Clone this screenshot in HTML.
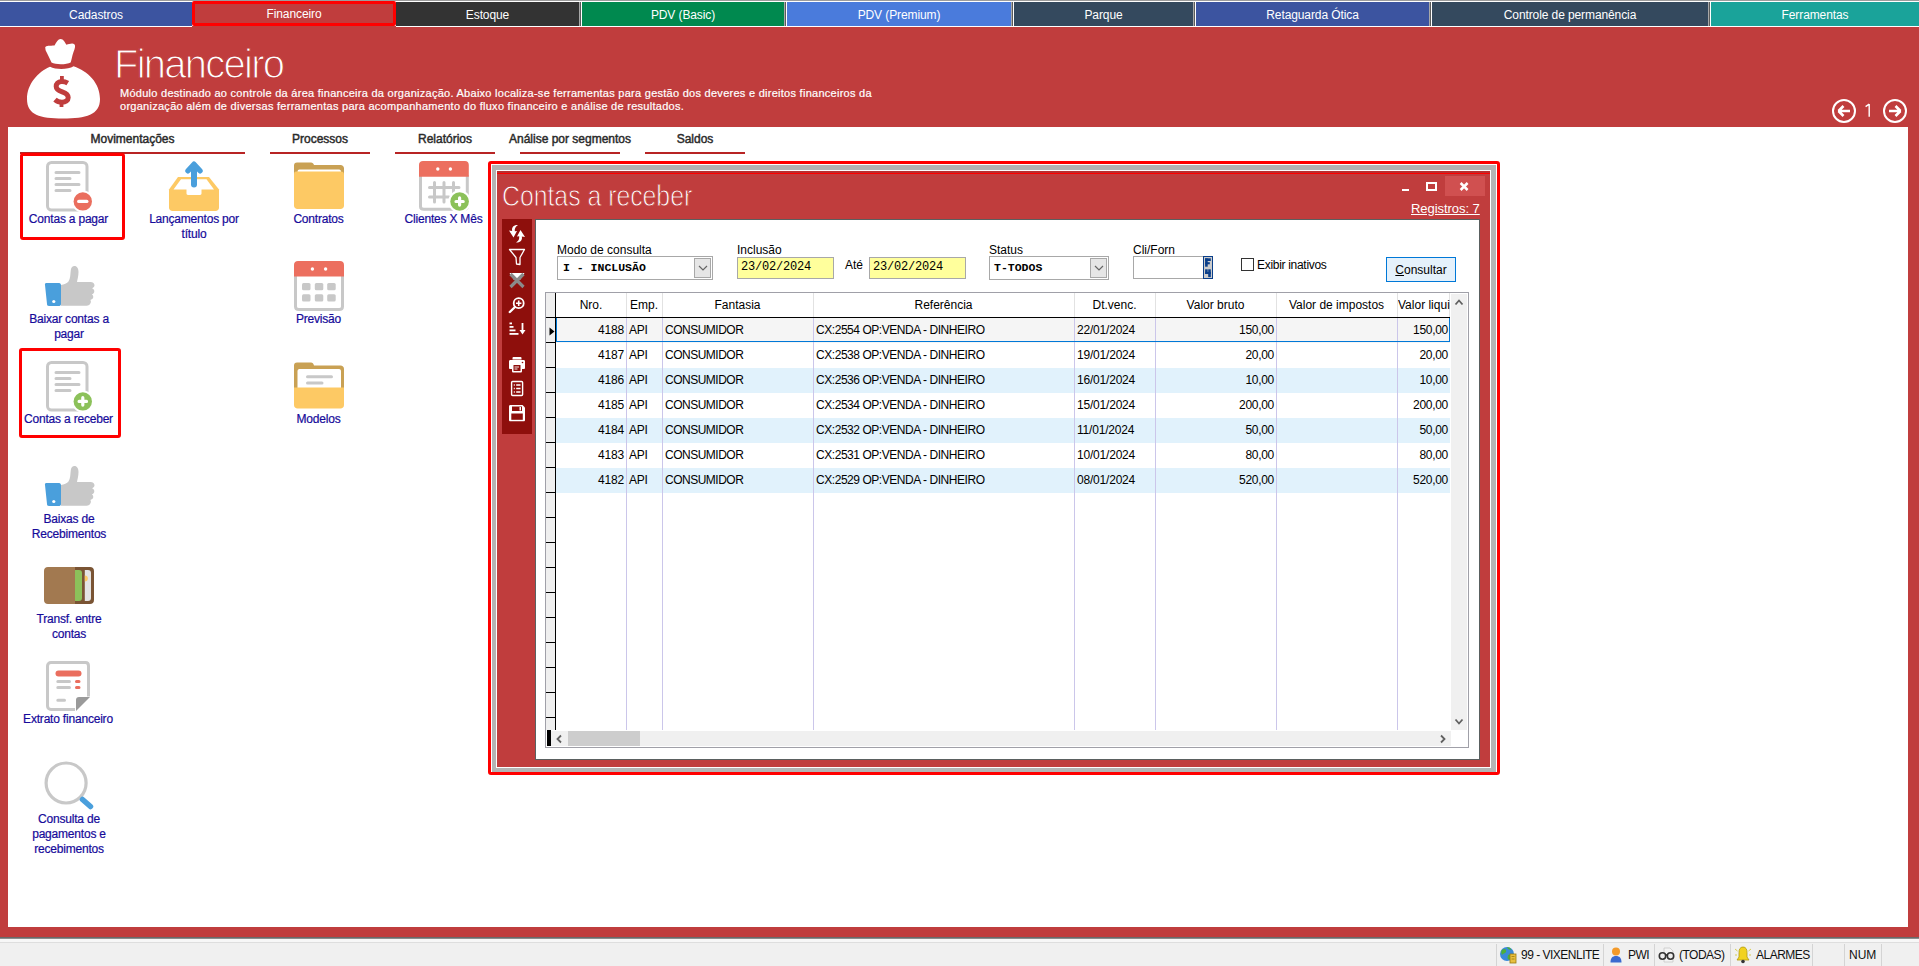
<!DOCTYPE html>
<html><head><meta charset="utf-8">
<style>
*{margin:0;padding:0;box-sizing:border-box}
html,body{width:1919px;height:966px;overflow:hidden;background:#c03d3d;font-family:"Liberation Sans",sans-serif;font-size:12px}
.a{position:absolute}
#topline{left:0;top:0;width:1919px;height:1px;background:#9c9c9c}
#tabs{left:0;top:1px;width:1919px;height:26px;background:#fff}
.tab{position:absolute;top:1px;height:24px;color:#fff;text-align:center;line-height:26px;font-size:12px;letter-spacing:-0.1px}
.sep{position:absolute;top:1px;height:24px;width:2px;background:linear-gradient(90deg,#a8a8a8 50%,#5c5c5c 50%)}
#main{left:0;top:27px;width:1919px;height:910px;background:#c03d3d}
#status{left:0;top:937px;width:1919px;height:29px;background:#f0f0f0;border-top:1px solid #a0a0a0}
#panel{left:8px;top:127px;width:1900px;height:800px;background:#fff}
.sec{position:absolute;top:131px;height:22px;font-weight:bold;font-size:11px;color:#333;text-align:center;border-bottom:2px solid #c03538;white-space:nowrap}
.lbl{position:absolute;color:#160a9a;font-size:12px;text-align:center;line-height:15px;letter-spacing:-0.2px;margin-top:1px;-webkit-text-stroke:0.2px #160a9a}
</style></head><body>
<div class="a" id="topline"></div>
<div class="a" id="tabs">
  <div class="tab" style="left:0;width:192px;background:#3c54a0">Cadastros</div>
  <div class="tab" style="left:192px;top:0;width:204px;height:25px;background:#c03d3d;border:3px solid #ff0000;border-radius:2px;line-height:20px">Financeiro</div>
  <div class="tab" style="left:396px;width:183px;background:#333333">Estoque</div>
  <div class="sep" style="left:579px"></div>
  <div class="tab" style="left:582px;width:202px;background:#00894f">PDV (Basic)</div>
  <div class="sep" style="left:784px"></div>
  <div class="tab" style="left:787px;width:224px;background:#4a7bdc">PDV (Premium)</div>
  <div class="sep" style="left:1011px"></div>
  <div class="tab" style="left:1014px;width:179px;background:#34495e">Parque</div>
  <div class="sep" style="left:1193px"></div>
  <div class="tab" style="left:1196px;width:233px;background:#3c54a0">Retaguarda Ótica</div>
  <div class="sep" style="left:1429px"></div>
  <div class="tab" style="left:1432px;width:276px;background:#34495e">Controle de permanência</div>
  <div class="sep" style="left:1708px"></div>
  <div class="tab" style="left:1711px;width:208px;background:#1aa39a">Ferramentas</div>
</div>
<div class="a" id="main"></div>
<div class="a" style="left:192px;top:26px;width:204px;height:1px;background:#c03d3d"></div>

<svg class="a" style="left:20px;top:35px" width="90" height="90" viewBox="0 0 90 90">
  <path fill="#fff" d="M25.2,12.3 C26,10.5 30,10.6 34.5,10.4 C36.5,7 38,4 40.6,4 C43.4,4 45,7.5 46.5,9.8 C49,9.2 52.5,7.6 54.6,9.4 C55.6,10.6 55,13 53.5,17 C52,21 51.6,25.5 50.6,27.4 C47,29.6 36,30 31.5,27.6 C29.5,23 27.6,19 25.6,15.2 Z"/>
  <path fill="#fff" d="M30,31.8 C36,34.8 48,34.8 53.6,31.2 C68,36 80,48 80,64 C80,80 66,83.5 43,83.5 C20,83.5 7,80 7,64 C7,49 18,37 30,31.8 Z"/>
  <path d="M47.8,48.2 C45.5,46.8 43.5,46.4 41.5,46.5 C38,46.7 36.2,48.8 36.2,51.4 C36.2,54.6 39.2,55.8 42.2,56.9 C45.6,58.1 48.2,59.6 48.2,62.6 C48.2,65.6 45.6,67.2 42,67.2 C39.5,67.2 37,66.4 35,64.6" fill="none" stroke="#c03d3d" stroke-width="5"/><path d="M41.9,41 V47 M41.5,66.5 V72" stroke="#c03d3d" stroke-width="3.8"/>
</svg>
<div class="a" style="left:114px;top:40px;font-size:40px;line-height:48px;color:#fff;white-space:nowrap;letter-spacing:-1.75px;-webkit-text-stroke:1.2px #c03d3d">Financeiro</div>
<div class="a" style="left:120px;top:87px;font-size:11px;line-height:13px;color:#fff;letter-spacing:0.27px;white-space:nowrap;-webkit-text-stroke:0.2px #fff">Módulo destinado ao controle da área financeira da organização. Abaixo localiza-se ferramentas para gestão dos deveres e direitos financeiros da<br>organização além de diversas ferramentas para acompanhamento do fluxo financeiro e análise de resultados.</div>
<svg class="a" style="left:1826px;top:93px" width="90" height="36" viewBox="0 0 90 36">
  <circle cx="18" cy="18" r="11" fill="none" stroke="#fff" stroke-width="2"/>
  <path d="M12,18 H24 M12.5,18 L17.5,13 M12.5,18 L17.5,23" stroke="#fff" stroke-width="2.6" fill="none"/>
  <circle cx="69" cy="18" r="11" fill="none" stroke="#fff" stroke-width="2"/>
  <path d="M63,18 H75 M74.5,18 L69.5,13 M74.5,18 L69.5,23" stroke="#fff" stroke-width="2.6" fill="none"/>
  <path d="M43.2,11 V23.8 M43.2,11.2 L39.6,13.6" stroke="#fff" stroke-width="1.4" fill="none"/>
</svg>
<div class="a" id="panel"></div>
<div class="a" style="left:52.5px;top:132px;width:160px;text-align:center;font-size:12px;color:#2a2a2a;white-space:nowrap;line-height:14px;-webkit-text-stroke:0.45px #2a2a2a">Movimentações</div>
<div class="a" style="left:20px;top:152px;width:225px;height:2px;background:#b82424"></div>
<div class="a" style="left:240.0px;top:132px;width:160px;text-align:center;font-size:12px;color:#2a2a2a;white-space:nowrap;line-height:14px;-webkit-text-stroke:0.45px #2a2a2a">Processos</div>
<div class="a" style="left:270px;top:152px;width:100px;height:2px;background:#b82424"></div>
<div class="a" style="left:365.0px;top:132px;width:160px;text-align:center;font-size:12px;color:#2a2a2a;white-space:nowrap;line-height:14px;-webkit-text-stroke:0.45px #2a2a2a">Relatórios</div>
<div class="a" style="left:395px;top:152px;width:100px;height:2px;background:#b82424"></div>
<div class="a" style="left:490.0px;top:132px;width:160px;text-align:center;font-size:12px;color:#2a2a2a;white-space:nowrap;line-height:14px;-webkit-text-stroke:0.45px #2a2a2a">Análise por segmentos</div>
<div class="a" style="left:520px;top:152px;width:100px;height:2px;background:#b82424"></div>
<div class="a" style="left:615.0px;top:132px;width:160px;text-align:center;font-size:12px;color:#2a2a2a;white-space:nowrap;line-height:14px;-webkit-text-stroke:0.45px #2a2a2a">Saldos</div>
<div class="a" style="left:645px;top:152px;width:100px;height:2px;background:#b82424"></div>
<div class="a" style="left:20px;top:153px;width:105px;height:87px;border:3px solid #ff0000;border-radius:3px"></div>
<div class="a" style="left:19px;top:348px;width:102px;height:90px;border:3px solid #ff0000;border-radius:3px"></div>
<svg class="a" style="left:46px;top:161px" width="48" height="52" viewBox="0 0 48 52">
<rect x="1.5" y="1.5" width="39.5" height="47.5" rx="4" fill="none" stroke="#c8c8c8" stroke-width="3"/>
<path d="M10,11.5 H33 M10,17.5 H24 M10,23.5 H33 M10,29.5 H24" stroke="#c8c8c8" stroke-width="3" stroke-linecap="round"/>
<circle cx="36.8" cy="40.4" r="11" fill="#fff"/><circle cx="36.8" cy="40.4" r="9.2" fill="#ea6e5e"/><path d="M32.8,40.4 H40.8" stroke="#fff" stroke-width="3.4" stroke-linecap="round"/></svg>
<div class="lbl" style="left:8.5px;top:211px;width:120px">Contas a pagar</div>
<svg class="a" style="left:44px;top:266px" width="52" height="42" viewBox="0 0 52 42">
<path fill="#c8c8c8" d="M17,19 C20,18.5 23,17.5 24.5,15.5 C26.5,12.5 26.3,8 26.8,4 C27.2,1.5 28.5,0 30.5,0 C33,0 34.5,2.5 34.5,6 C34.5,10 33.5,13 33,16 L46.5,16 C49,16 50.5,17.5 50.5,19.3 C50.5,20.8 49.5,21.8 48,22.2 C49.5,22.7 50.3,23.8 50.3,25.3 C50.3,27 49.2,28 47.8,28.4 C49,29 49.5,30.2 49.2,31.5 C48.8,32.9 47.8,33.6 46.3,33.9 C46.9,34.6 47.1,35.6 46.7,36.8 C46,38.8 44.5,39.8 42.5,39.8 L17,39.8 Z"/>
<path fill="#4a9fdc" d="M1,19 C0.5,17.5 1.5,17 3,17 L15,17 C16.5,17 17,18 17,19.5 L17,38 C17,39.5 16,40 14.5,40 L5,40 C3.5,40 3,39 3,38 Z"/>
<circle cx="9.8" cy="35.5" r="1.6" fill="#fff"/></svg>
<div class="lbl" style="left:9.0px;top:311px;width:120px">Baixar contas a<br>pagar</div>
<svg class="a" style="left:46px;top:361px" width="48" height="52" viewBox="0 0 48 52">
<rect x="1.5" y="1.5" width="39.5" height="47.5" rx="4" fill="none" stroke="#c8c8c8" stroke-width="3"/>
<path d="M10,11.5 H33 M10,17.5 H24 M10,23.5 H33 M10,29.5 H24" stroke="#c8c8c8" stroke-width="3" stroke-linecap="round"/>
<circle cx="36.8" cy="40.4" r="11" fill="#fff"/><circle cx="36.8" cy="40.4" r="9.2" fill="#8cc15a"/><path d="M33.1,40.4 H40.5 M36.8,36.7 V44.1" stroke="#fff" stroke-width="3.2" stroke-linecap="round"/></svg>
<div class="lbl" style="left:8.5px;top:411px;width:120px">Contas a receber</div>
<svg class="a" style="left:44px;top:466px" width="52" height="42" viewBox="0 0 52 42">
<path fill="#c8c8c8" d="M17,19 C20,18.5 23,17.5 24.5,15.5 C26.5,12.5 26.3,8 26.8,4 C27.2,1.5 28.5,0 30.5,0 C33,0 34.5,2.5 34.5,6 C34.5,10 33.5,13 33,16 L46.5,16 C49,16 50.5,17.5 50.5,19.3 C50.5,20.8 49.5,21.8 48,22.2 C49.5,22.7 50.3,23.8 50.3,25.3 C50.3,27 49.2,28 47.8,28.4 C49,29 49.5,30.2 49.2,31.5 C48.8,32.9 47.8,33.6 46.3,33.9 C46.9,34.6 47.1,35.6 46.7,36.8 C46,38.8 44.5,39.8 42.5,39.8 L17,39.8 Z"/>
<path fill="#4a9fdc" d="M1,19 C0.5,17.5 1.5,17 3,17 L15,17 C16.5,17 17,18 17,19.5 L17,38 C17,39.5 16,40 14.5,40 L5,40 C3.5,40 3,39 3,38 Z"/>
<circle cx="9.8" cy="35.5" r="1.6" fill="#fff"/></svg>
<div class="lbl" style="left:9.0px;top:511px;width:120px">Baixas de<br>Recebimentos</div>
<svg class="a" style="left:44px;top:567px" width="50" height="38" viewBox="0 0 50 38">
<path fill="#7a5434" d="M28,0 H46 C48.5,0 50,1.5 50,4 V33 C50,35.5 48.5,37 46,37 H28 Z"/>
<path fill="#a27950" d="M4,0 H31 V37 H4 C1.5,37 0,35.5 0,33 V4 C0,1.5 1.5,0 4,0 Z"/>
<path fill="#8cc15a" d="M31,3 H35 C37,3 38,4 38,6 V31 C38,33 37,34 35,34 H31 Z"/>
<path fill="#e4e4e4" d="M40.8,3 H44 C46,3 47,4 47,6 V31 C47,33 46,34 44,34 H40.8 Z"/>
<path fill="#fdc964" d="M40.8,8.5 A3,3 0 0 1 40.8,14.5 Z"/></svg>
<div class="lbl" style="left:9.0px;top:611px;width:120px">Transf. entre<br>contas</div>
<svg class="a" style="left:46px;top:661px" width="46" height="52" viewBox="0 0 46 52">
<path d="M29,48.5 H5 C3,48.5 1.5,47 1.5,45 V5 C1.5,3 3,1.5 5,1.5 H39.5 C41.5,1.5 42.5,3 42.5,5 V35.5" fill="none" stroke="#c8c8c8" stroke-width="3"/>
<path d="M30,50 L44,36 H33 C31,36 30,37 30,39 Z" fill="#9a9a9a"/>
<path d="M12.5,12.5 H32.5" stroke="#ea6e5e" stroke-width="6" stroke-linecap="round"/>
<path d="M11.8,20.5 H23.5 M11.8,26.5 H23.5 M11.8,39.3 H18.5" stroke="#c8c8c8" stroke-width="3" stroke-linecap="round"/>
<path d="M30.5,20.5 H33 M30.5,26.5 H33" stroke="#ea6e5e" stroke-width="3" stroke-linecap="round"/></svg>
<div class="lbl" style="left:8.0px;top:711px;width:120px">Extrato financeiro</div>
<svg class="a" style="left:40px;top:758px" width="56" height="54" viewBox="0 0 56 54">
<circle cx="26.1" cy="25" r="20" fill="none" stroke="#c8c8c8" stroke-width="3.2"/>
<path d="M42.5,41.5 L50.5,48.5" stroke="#4a9fdc" stroke-width="5.5" stroke-linecap="round"/></svg>
<div class="lbl" style="left:9.0px;top:811px;width:120px">Consulta de<br>pagamentos e<br>recebimentos</div>
<svg class="a" style="left:168px;top:160px" width="52" height="52" viewBox="0 0 52 52">
<path fill="#fdc964" d="M10,17 H41 L51,29.5 V47.5 C51,49.5 49.5,51 47.5,51 H4.5 C2.5,51 1,49.5 1,47.5 V29.5 Z"/>
<path fill="#fff" d="M13,19.2 H38.5 L46,29.5 H33.5 V33.3 C33.5,34.5 33,35 32,35 H20 C19,35 18.5,34.5 18.5,33.3 V29.5 H5.5 Z"/>
<path d="M26,24.5 V6" stroke="#4a9fdc" stroke-width="6" stroke-linecap="round"/>
<path d="M20,10.8 L26,4.2 L32,10.8" stroke="#4a9fdc" stroke-width="5.4" stroke-linecap="round" stroke-linejoin="round" fill="#4a9fdc"/></svg>
<div class="lbl" style="left:134.0px;top:211px;width:120px">Lançamentos por<br>título</div>
<svg class="a" style="left:294px;top:162px" width="51" height="48" viewBox="0 0 51 48">
<path fill="#c9a154" d="M3,0.5 H17 C18.5,0.5 19.5,1.5 20,3 H46.5 C48.5,3 50,4.5 50,6.5 V20 H0 V3.5 C0,1.5 1,0.5 3,0.5 Z"/>
<path fill="#fff" d="M5.5,7.5 H45 C46.5,7.5 47,8.5 47,10 V14 H3.5 V10 C3.5,8.5 4,7.5 5.5,7.5 Z"/>
<path fill="#fdc964" d="M0,12 C0,10 1,9.5 3,9.5 H47 C49,9.5 50,10.5 50,12.5 V43.5 C50,45.5 48.5,47 46.5,47 H3.5 C1.5,47 0,45.5 0,43.5 Z"/></svg>
<div class="lbl" style="left:258.5px;top:211px;width:120px">Contratos</div>
<svg class="a" style="left:294px;top:261px" width="51" height="51" viewBox="0 0 51 51">
<path d="M1.5,14 V45.5 C1.5,47.5 3,48.5 5,48.5 H45 C47,48.5 48.5,47.5 48.5,45.5 V14" fill="none" stroke="#c8c8c8" stroke-width="3"/>
<path fill="#ec6f5f" d="M4,0 H46 C48.5,0 50,1.5 50,4 V15.5 H0 V4 C0,1.5 1.5,0 4,0 Z"/>
<circle cx="18.4" cy="8" r="1.7" fill="#fff"/><circle cx="31.6" cy="8" r="1.7" fill="#fff"/>
<g fill="#c8c8c8"><rect x="8" y="22" width="8.5" height="7.3" rx="1.5"/><rect x="20.8" y="22" width="8.5" height="7.3" rx="1.5"/><rect x="33.2" y="22" width="8.5" height="7.3" rx="1.5"/>
<rect x="8" y="33.2" width="8.5" height="7.3" rx="1.5"/><rect x="20.8" y="33.2" width="8.5" height="7.3" rx="1.5"/><rect x="33.2" y="33.2" width="8.5" height="7.3" rx="1.5"/></g></svg>
<div class="lbl" style="left:258.5px;top:311px;width:120px">Previsão</div>
<svg class="a" style="left:294px;top:362px" width="51" height="48" viewBox="0 0 51 48">
<path fill="#c9a154" d="M3,0.5 H17 C18.5,0.5 19.5,1.5 20,3.5 H46.5 C48.5,3.5 50,5 50,7 V30 H0 V3.5 C0,1.5 1,0.5 3,0.5 Z"/>
<path fill="#fff" d="M5.5,7 H45 C46.5,7 47,8 47,9.5 V28 H3.5 V9.5 C3.5,8 4,7 5.5,7 Z"/>
<path d="M13.5,14.8 H37.5 M13.5,21.1 H28" stroke="#c8c8c8" stroke-width="3" stroke-linecap="round"/>
<path fill="#fdc964" d="M0,25.6 H50 V43 C50,45 48.5,46.5 46.5,46.5 H3.5 C1.5,46.5 0,45 0,43 Z"/></svg>
<div class="lbl" style="left:258.5px;top:411px;width:120px">Modelos</div>
<svg class="a" style="left:419px;top:161px" width="51" height="51" viewBox="0 0 51 51">
<path d="M1.5,14 V45.5 C1.5,47.5 3,48.3 5,48.3 H45 C47,48.3 48.3,47.5 48.3,45.5 V14" fill="none" stroke="#c8c8c8" stroke-width="3"/>
<path fill="#ec6f5f" d="M4,0 H46 C48.3,0 49.8,1.5 49.8,4 V15.8 H0 V4 C0,1.5 1.5,0 4,0 Z"/>
<circle cx="18.8" cy="8" r="1.7" fill="#fff"/><circle cx="31.4" cy="8" r="1.7" fill="#fff"/>
<path d="M15.5,21.5 V41 M25,21.5 V41 M34.5,21.5 V34 M10.5,26.4 H40 M10.5,35.9 H30" stroke="#c8c8c8" stroke-width="3" stroke-linecap="round"/>
<circle cx="40.6" cy="40.5" r="11.3" fill="#fff"/><circle cx="40.6" cy="40.5" r="9.3" fill="#8cc15a"/>
<path d="M37,40.5 H44.2 M40.6,36.9 V44.1" stroke="#fff" stroke-width="3.2" stroke-linecap="round"/></svg>
<div class="lbl" style="left:383.5px;top:211px;width:120px">Clientes X Mês</div>
<div class="a" style="left:488px;top:161px;width:1012px;height:614px;border:3px solid #ff0000;border-radius:3px;background:#fff"></div>
<div class="a" style="left:492px;top:165px;width:1004px;height:607px;background:#b4b4b4"></div>
<div class="a" style="left:496px;top:170px;width:995px;height:598px;background:#fdfdfd"></div>
<div class="a" style="left:497px;top:171px;width:993px;height:596px;background:#c03d3d;border-top:2px solid #b53030"></div>
<div class="a" style="left:497px;top:173px;width:993px;height:1px;background:#ff0000"></div>
<div class="a" style="left:502px;top:179px;font-size:29px;line-height:35px;color:#fff;white-space:nowrap;-webkit-text-stroke:0.9px #c03d3d;transform:scaleX(0.855);transform-origin:0 0">Contas a receber</div>
<div class="a" style="left:1445px;top:176px;width:40px;height:20px;background:#d05050"></div>
<div class="a" style="left:1402px;top:189px;width:7px;height:2px;background:#fff"></div>
<div class="a" style="left:1426px;top:182px;width:11px;height:9px;border:2px solid #fff"></div>
<svg class="a" style="left:1458px;top:181px" width="12" height="11" viewBox="0 0 12 11"><path d="M2.6,2 L9.6,9 M9.6,2 L2.6,9" stroke="#fff" stroke-width="2.5"/></svg>
<div class="a" style="left:1411px;top:201px;font-size:13px;line-height:16px;color:#fff;text-decoration:underline;white-space:nowrap;letter-spacing:-0.05px">Registros: 7</div>
<div class="a" style="left:502px;top:219px;width:30px;height:215px;background:#8e0f0c"></div>
<div class="a" style="left:535px;top:219px;width:945px;height:541px;background:#fff;border:1px solid #5a6060"></div>
<svg class="a" style="left:502px;top:219px" width="30" height="215" viewBox="0 0 30 215">
<g fill="#fff" stroke="none">
<path d="M14.5,6 C11,6.5 9.5,9 10.2,12 L7,11.5 L11.5,18.5 L15,12 L12.8,12.3 C12.5,9.5 13.5,7.5 16,6 Z"/>
<path d="M15.5,23.5 C19,23 20.5,20.5 19.8,17.5 L23,18 L18.5,11 L15,17.5 L17.2,17.2 C17.5,20 16.5,22 14,23.5 Z"/>
</g>
<path d="M7.5,30.5 H22.5 L18,38.5 V45.5 L14.5,45 L14,38.5 Z" fill="none" stroke="#fff" stroke-width="1.3" stroke-linejoin="round"/>
<path d="M7.5,54 H22.5 L18,61 H12 Z" fill="#fff"/>
<path d="M8.5,55 L21.5,68 M21.5,55 L8.5,68" stroke="#8a8a8a" stroke-width="3.2"/>
<circle cx="16.7" cy="84.2" r="5" fill="none" stroke="#fff" stroke-width="1.8"/>
<path d="M16.7,81.5 V87 M14,84.2 H19.4" stroke="#fff" stroke-width="1.6"/>
<path d="M13,88 L7.8,93" stroke="#fff" stroke-width="2.4" stroke-linecap="round"/>
<g fill="#fff"><rect x="7.5" y="103.5" width="2.5" height="1.8"/><rect x="7.5" y="107" width="4" height="1.8"/><rect x="7.5" y="110.5" width="6" height="1.8"/><rect x="7.5" y="114" width="9" height="1.8"/></g>
<path d="M20.5,104 V113" stroke="#fff" stroke-width="1.8"/><path d="M17.5,111 L20.5,115.5 L23.5,111 Z" fill="#fff"/>
<path d="M10.5,139 V140.5 H19.5 V139 C19.5,138 19,138 18,138 H12 C11,138 10.5,138 10.5,139 Z M8.5,141 H21.5 C22.5,141 23,141.5 23,142.5 V149 C23,149.5 22.5,150 22,150 H20 V152 C20,153 19.5,153.5 18.5,153.5 H11.5 C10.5,153.5 10,153 10,152 V150 H8 C7.5,150 7,149.5 7,149 V142.5 C7,141.5 7.5,141 8.5,141 Z" fill="#fff"/>
<rect x="11.5" y="146" width="7" height="6" fill="#8e0f0c"/><path d="M12.5,148 H17 M12.5,150 H15.5" stroke="#fff" stroke-width="0.9"/><circle cx="20.5" cy="143.5" r="0.8" fill="#8e0f0c"/>
<rect x="9.6" y="162.5" width="11" height="14" rx="1" fill="none" stroke="#fff" stroke-width="1.4"/>
<path d="M11.8,166 H12.8 M11.8,169.5 H12.8 M11.8,173 H12.8 M14.2,166 H18.5 M14.2,169.5 H18.5 M14.2,173 H18.5" stroke="#fff" stroke-width="1.3"/>
<path d="M8.5,186 H20.5 L23,188.5 V201 C23,201.8 22.5,202.3 21.7,202.3 H8.3 C7.5,202.3 7,201.8 7,201 V187.5 C7,186.5 7.5,186 8.5,186 Z" fill="#fff"/>
<rect x="10" y="187.5" width="10" height="4.5" fill="#8e0f0c"/><rect x="17.5" y="188" width="1.5" height="3.5" fill="#fff"/>
<rect x="9.3" y="194.5" width="11.5" height="6.3" fill="#8e0f0c"/>
</svg>
<div class="a" style="left:557px;top:243px;font-size:12px;line-height:14px;color:#000;white-space:nowrap">Modo de consulta</div>
<div class="a" style="left:737px;top:243px;font-size:12px;line-height:14px;color:#000;white-space:nowrap">Inclusão</div>
<div class="a" style="left:845px;top:258px;font-size:12px;line-height:14px;color:#000;white-space:nowrap">Até</div>
<div class="a" style="left:989px;top:243px;font-size:12px;line-height:14px;color:#000;white-space:nowrap">Status</div>
<div class="a" style="left:1133px;top:243px;font-size:12px;line-height:14px;color:#000;white-space:nowrap">Cli/Forn</div>
<div class="a" style="left:557px;top:256px;width:156px;height:24px;border:1px solid #a8a8a8;background:#fff"></div><div class="a" style="left:563px;top:261px;font-family:'Liberation Mono',monospace;font-weight:bold;font-size:11.5px;line-height:14px;color:#000;white-space:nowrap">I - INCLUSÃO</div><div class="a" style="left:694px;top:258px;width:17px;height:20px;border:1px solid #a8a8a8;background:#e6e6e6"></div><svg class="a" style="left:698px;top:264px" width="10" height="8" viewBox="0 0 10 8"><path d="M1,2 L5,6 L9,2" fill="none" stroke="#666" stroke-width="1.2"/></svg>
<div class="a" style="left:989px;top:256px;width:120px;height:24px;border:1px solid #a8a8a8;background:#fff"></div><div class="a" style="left:994px;top:261px;font-family:'Liberation Mono',monospace;font-weight:bold;font-size:11.5px;line-height:14px;color:#000;white-space:nowrap">T-TODOS</div><div class="a" style="left:1090px;top:258px;width:17px;height:20px;border:1px solid #a8a8a8;background:#e6e6e6"></div><svg class="a" style="left:1094px;top:264px" width="10" height="8" viewBox="0 0 10 8"><path d="M1,2 L5,6 L9,2" fill="none" stroke="#666" stroke-width="1.2"/></svg>
<div class="a" style="left:737px;top:257px;width:97px;height:22px;border:1px solid #a8a8a8;background:#ffff9c"></div>
<div class="a" style="left:741px;top:260px;font-family:'Liberation Mono',monospace;font-size:12px;line-height:14px;color:#000;white-space:nowrap;letter-spacing:-0.2px">23/02/2024</div>
<div class="a" style="left:869px;top:257px;width:97px;height:22px;border:1px solid #a8a8a8;background:#ffff9c"></div>
<div class="a" style="left:873px;top:260px;font-family:'Liberation Mono',monospace;font-size:12px;line-height:14px;color:#000;white-space:nowrap;letter-spacing:-0.2px">23/02/2024</div>
<div class="a" style="left:1133px;top:256px;width:71px;height:23px;border:1px solid #a8a8a8;background:#fff"></div>
<svg class="a" style="left:1203px;top:256px" width="10" height="23" viewBox="0 0 10 23">
<rect x="0.5" y="0.5" width="9" height="22" fill="#cccccc" stroke="#0b3f8a" stroke-width="1"/>
<g fill="#0b3f8a"><rect x="2.1" y="2.3" width="5.7" height="2.7"/><rect x="2.1" y="2.3" width="2.6" height="8.4"/><rect x="2.1" y="6.2" width="4.7" height="2.1"/>
<rect x="2.1" y="13.3" width="2.6" height="4.7"/><rect x="2.1" y="15.9" width="5.7" height="2.1"/><rect x="5.2" y="13.3" width="2.6" height="7.8"/></g></svg>
<div class="a" style="left:1241px;top:258px;width:13px;height:13px;border:1.5px solid #333;background:#fff"></div>
<div class="a" style="left:1257px;top:258px;font-size:12px;line-height:14px;color:#000;white-space:nowrap;letter-spacing:-0.3px">Exibir inativos</div>
<div class="a" style="left:1386px;top:257px;width:70px;height:25px;border:1px solid #0078d7;background:#e5f1fb"></div>
<div class="a" style="left:1386px;top:263px;width:70px;text-align:center;font-size:12px;line-height:14px;color:#000;white-space:nowrap"><u>C</u>onsultar</div>
<div class="a" style="left:545px;top:292px;width:924px;height:456px;border:1px solid #a0a0a8;background:#fff"></div>
<div class="a" style="left:556px;top:318px;width:894px;height:25px;background:#f5f5f5"></div>
<div class="a" style="left:556px;top:368px;width:894px;height:25px;background:#e1f2fc"></div>
<div class="a" style="left:556px;top:418px;width:894px;height:25px;background:#e1f2fc"></div>
<div class="a" style="left:556px;top:468px;width:894px;height:25px;background:#e1f2fc"></div>
<div class="a" style="left:626px;top:293px;width:1px;height:24px;background:#e2e2e2"></div>
<div class="a" style="left:626px;top:318px;width:1px;height:412px;background:#cbc6ea"></div>
<div class="a" style="left:662px;top:293px;width:1px;height:24px;background:#e2e2e2"></div>
<div class="a" style="left:662px;top:318px;width:1px;height:412px;background:#cbc6ea"></div>
<div class="a" style="left:813px;top:293px;width:1px;height:24px;background:#e2e2e2"></div>
<div class="a" style="left:813px;top:318px;width:1px;height:412px;background:#cbc6ea"></div>
<div class="a" style="left:1074px;top:293px;width:1px;height:24px;background:#e2e2e2"></div>
<div class="a" style="left:1074px;top:318px;width:1px;height:412px;background:#cbc6ea"></div>
<div class="a" style="left:1155px;top:293px;width:1px;height:24px;background:#e2e2e2"></div>
<div class="a" style="left:1155px;top:318px;width:1px;height:412px;background:#cbc6ea"></div>
<div class="a" style="left:1276px;top:293px;width:1px;height:24px;background:#e2e2e2"></div>
<div class="a" style="left:1276px;top:318px;width:1px;height:412px;background:#cbc6ea"></div>
<div class="a" style="left:1397px;top:293px;width:1px;height:24px;background:#e2e2e2"></div>
<div class="a" style="left:1397px;top:318px;width:1px;height:412px;background:#cbc6ea"></div>
<div class="a" style="left:1449px;top:293px;width:1px;height:24px;background:#e2e2e2"></div>
<div class="a" style="left:546px;top:317px;width:904px;height:1px;background:#000"></div>
<div class="a" style="left:556px;top:318px;width:894px;height:24px;border-left:1.5px solid #0078d7;border-right:1px solid #0078d7;border-bottom:1px solid #0078d7"></div>
<div class="a" style="left:546px;top:293px;width:9px;height:437px;background:#efefef"></div>
<div class="a" style="left:555px;top:293px;width:1px;height:437px;background:#000"></div>
<div class="a" style="left:546px;top:317px;width:10px;height:1px;background:#000"></div>
<div class="a" style="left:546px;top:342px;width:10px;height:1px;background:#000"></div>
<div class="a" style="left:546px;top:367px;width:10px;height:1px;background:#000"></div>
<div class="a" style="left:546px;top:392px;width:10px;height:1px;background:#000"></div>
<div class="a" style="left:546px;top:417px;width:10px;height:1px;background:#000"></div>
<div class="a" style="left:546px;top:442px;width:10px;height:1px;background:#000"></div>
<div class="a" style="left:546px;top:467px;width:10px;height:1px;background:#000"></div>
<div class="a" style="left:546px;top:492px;width:10px;height:1px;background:#000"></div>
<div class="a" style="left:546px;top:517px;width:10px;height:1px;background:#000"></div>
<div class="a" style="left:546px;top:542px;width:10px;height:1px;background:#000"></div>
<div class="a" style="left:546px;top:567px;width:10px;height:1px;background:#000"></div>
<div class="a" style="left:546px;top:592px;width:10px;height:1px;background:#000"></div>
<div class="a" style="left:546px;top:617px;width:10px;height:1px;background:#000"></div>
<div class="a" style="left:546px;top:642px;width:10px;height:1px;background:#000"></div>
<div class="a" style="left:546px;top:667px;width:10px;height:1px;background:#000"></div>
<div class="a" style="left:546px;top:692px;width:10px;height:1px;background:#000"></div>
<div class="a" style="left:546px;top:717px;width:10px;height:1px;background:#000"></div>
<svg class="a" style="left:549px;top:327px" width="6" height="9" viewBox="0 0 6 9"><path d="M0.5,0.5 L5.5,4.5 L0.5,8.5 Z" fill="#000"/></svg>
<div class="a" style="left:556px;top:298px;width:70px;text-align:center;font-size:12px;line-height:14px;color:#000;white-space:nowrap;overflow:hidden">Nro.</div>
<div class="a" style="left:626px;top:298px;width:36px;text-align:center;font-size:12px;line-height:14px;color:#000;white-space:nowrap;overflow:hidden">Emp.</div>
<div class="a" style="left:662px;top:298px;width:151px;text-align:center;font-size:12px;line-height:14px;color:#000;white-space:nowrap;overflow:hidden">Fantasia</div>
<div class="a" style="left:813px;top:298px;width:261px;text-align:center;font-size:12px;line-height:14px;color:#000;white-space:nowrap;overflow:hidden">Referência</div>
<div class="a" style="left:1074px;top:298px;width:81px;text-align:center;font-size:12px;line-height:14px;color:#000;white-space:nowrap;overflow:hidden">Dt.venc.</div>
<div class="a" style="left:1155px;top:298px;width:121px;text-align:center;font-size:12px;line-height:14px;color:#000;white-space:nowrap;overflow:hidden">Valor bruto</div>
<div class="a" style="left:1276px;top:298px;width:121px;text-align:center;font-size:12px;line-height:14px;color:#000;white-space:nowrap;overflow:hidden">Valor de impostos</div>
<div class="a" style="left:1398px;top:298px;width:52px;font-size:12px;line-height:14px;color:#000;white-space:nowrap;overflow:hidden">Valor liquido</div>
<div class="a" style="left:560px;top:323px;width:64px;text-align:right;font-size:12px;line-height:14px;color:#000;white-space:nowrap;letter-spacing:-0.2px">4188</div>
<div class="a" style="left:629px;top:323px;font-size:12px;line-height:14px;color:#000;white-space:nowrap;letter-spacing:-0.2px">API</div>
<div class="a" style="left:665px;top:323px;font-size:12px;line-height:14px;color:#000;white-space:nowrap;letter-spacing:-0.2px;letter-spacing:-0.5px">CONSUMIDOR</div>
<div class="a" style="left:816px;top:323px;font-size:12px;line-height:14px;color:#000;white-space:nowrap;letter-spacing:-0.2px;letter-spacing:-0.45px">CX:2554 OP:VENDA - DINHEIRO</div>
<div class="a" style="left:1077px;top:323px;font-size:12px;line-height:14px;color:#000;white-space:nowrap;letter-spacing:-0.2px;letter-spacing:-0.2px">22/01/2024</div>
<div class="a" style="left:1180px;top:323px;width:94px;text-align:right;font-size:12px;line-height:14px;color:#000;white-space:nowrap;letter-spacing:-0.2px;letter-spacing:-0.3px">150,00</div>
<div class="a" style="left:1354px;top:323px;width:94px;text-align:right;font-size:12px;line-height:14px;color:#000;white-space:nowrap;letter-spacing:-0.2px;letter-spacing:-0.3px">150,00</div>
<div class="a" style="left:560px;top:348px;width:64px;text-align:right;font-size:12px;line-height:14px;color:#000;white-space:nowrap;letter-spacing:-0.2px">4187</div>
<div class="a" style="left:629px;top:348px;font-size:12px;line-height:14px;color:#000;white-space:nowrap;letter-spacing:-0.2px">API</div>
<div class="a" style="left:665px;top:348px;font-size:12px;line-height:14px;color:#000;white-space:nowrap;letter-spacing:-0.2px;letter-spacing:-0.5px">CONSUMIDOR</div>
<div class="a" style="left:816px;top:348px;font-size:12px;line-height:14px;color:#000;white-space:nowrap;letter-spacing:-0.2px;letter-spacing:-0.45px">CX:2538 OP:VENDA - DINHEIRO</div>
<div class="a" style="left:1077px;top:348px;font-size:12px;line-height:14px;color:#000;white-space:nowrap;letter-spacing:-0.2px;letter-spacing:-0.2px">19/01/2024</div>
<div class="a" style="left:1180px;top:348px;width:94px;text-align:right;font-size:12px;line-height:14px;color:#000;white-space:nowrap;letter-spacing:-0.2px;letter-spacing:-0.3px">20,00</div>
<div class="a" style="left:1354px;top:348px;width:94px;text-align:right;font-size:12px;line-height:14px;color:#000;white-space:nowrap;letter-spacing:-0.2px;letter-spacing:-0.3px">20,00</div>
<div class="a" style="left:560px;top:373px;width:64px;text-align:right;font-size:12px;line-height:14px;color:#000;white-space:nowrap;letter-spacing:-0.2px">4186</div>
<div class="a" style="left:629px;top:373px;font-size:12px;line-height:14px;color:#000;white-space:nowrap;letter-spacing:-0.2px">API</div>
<div class="a" style="left:665px;top:373px;font-size:12px;line-height:14px;color:#000;white-space:nowrap;letter-spacing:-0.2px;letter-spacing:-0.5px">CONSUMIDOR</div>
<div class="a" style="left:816px;top:373px;font-size:12px;line-height:14px;color:#000;white-space:nowrap;letter-spacing:-0.2px;letter-spacing:-0.45px">CX:2536 OP:VENDA - DINHEIRO</div>
<div class="a" style="left:1077px;top:373px;font-size:12px;line-height:14px;color:#000;white-space:nowrap;letter-spacing:-0.2px;letter-spacing:-0.2px">16/01/2024</div>
<div class="a" style="left:1180px;top:373px;width:94px;text-align:right;font-size:12px;line-height:14px;color:#000;white-space:nowrap;letter-spacing:-0.2px;letter-spacing:-0.3px">10,00</div>
<div class="a" style="left:1354px;top:373px;width:94px;text-align:right;font-size:12px;line-height:14px;color:#000;white-space:nowrap;letter-spacing:-0.2px;letter-spacing:-0.3px">10,00</div>
<div class="a" style="left:560px;top:398px;width:64px;text-align:right;font-size:12px;line-height:14px;color:#000;white-space:nowrap;letter-spacing:-0.2px">4185</div>
<div class="a" style="left:629px;top:398px;font-size:12px;line-height:14px;color:#000;white-space:nowrap;letter-spacing:-0.2px">API</div>
<div class="a" style="left:665px;top:398px;font-size:12px;line-height:14px;color:#000;white-space:nowrap;letter-spacing:-0.2px;letter-spacing:-0.5px">CONSUMIDOR</div>
<div class="a" style="left:816px;top:398px;font-size:12px;line-height:14px;color:#000;white-space:nowrap;letter-spacing:-0.2px;letter-spacing:-0.45px">CX:2534 OP:VENDA - DINHEIRO</div>
<div class="a" style="left:1077px;top:398px;font-size:12px;line-height:14px;color:#000;white-space:nowrap;letter-spacing:-0.2px;letter-spacing:-0.2px">15/01/2024</div>
<div class="a" style="left:1180px;top:398px;width:94px;text-align:right;font-size:12px;line-height:14px;color:#000;white-space:nowrap;letter-spacing:-0.2px;letter-spacing:-0.3px">200,00</div>
<div class="a" style="left:1354px;top:398px;width:94px;text-align:right;font-size:12px;line-height:14px;color:#000;white-space:nowrap;letter-spacing:-0.2px;letter-spacing:-0.3px">200,00</div>
<div class="a" style="left:560px;top:423px;width:64px;text-align:right;font-size:12px;line-height:14px;color:#000;white-space:nowrap;letter-spacing:-0.2px">4184</div>
<div class="a" style="left:629px;top:423px;font-size:12px;line-height:14px;color:#000;white-space:nowrap;letter-spacing:-0.2px">API</div>
<div class="a" style="left:665px;top:423px;font-size:12px;line-height:14px;color:#000;white-space:nowrap;letter-spacing:-0.2px;letter-spacing:-0.5px">CONSUMIDOR</div>
<div class="a" style="left:816px;top:423px;font-size:12px;line-height:14px;color:#000;white-space:nowrap;letter-spacing:-0.2px;letter-spacing:-0.45px">CX:2532 OP:VENDA - DINHEIRO</div>
<div class="a" style="left:1077px;top:423px;font-size:12px;line-height:14px;color:#000;white-space:nowrap;letter-spacing:-0.2px;letter-spacing:-0.2px">11/01/2024</div>
<div class="a" style="left:1180px;top:423px;width:94px;text-align:right;font-size:12px;line-height:14px;color:#000;white-space:nowrap;letter-spacing:-0.2px;letter-spacing:-0.3px">50,00</div>
<div class="a" style="left:1354px;top:423px;width:94px;text-align:right;font-size:12px;line-height:14px;color:#000;white-space:nowrap;letter-spacing:-0.2px;letter-spacing:-0.3px">50,00</div>
<div class="a" style="left:560px;top:448px;width:64px;text-align:right;font-size:12px;line-height:14px;color:#000;white-space:nowrap;letter-spacing:-0.2px">4183</div>
<div class="a" style="left:629px;top:448px;font-size:12px;line-height:14px;color:#000;white-space:nowrap;letter-spacing:-0.2px">API</div>
<div class="a" style="left:665px;top:448px;font-size:12px;line-height:14px;color:#000;white-space:nowrap;letter-spacing:-0.2px;letter-spacing:-0.5px">CONSUMIDOR</div>
<div class="a" style="left:816px;top:448px;font-size:12px;line-height:14px;color:#000;white-space:nowrap;letter-spacing:-0.2px;letter-spacing:-0.45px">CX:2531 OP:VENDA - DINHEIRO</div>
<div class="a" style="left:1077px;top:448px;font-size:12px;line-height:14px;color:#000;white-space:nowrap;letter-spacing:-0.2px;letter-spacing:-0.2px">10/01/2024</div>
<div class="a" style="left:1180px;top:448px;width:94px;text-align:right;font-size:12px;line-height:14px;color:#000;white-space:nowrap;letter-spacing:-0.2px;letter-spacing:-0.3px">80,00</div>
<div class="a" style="left:1354px;top:448px;width:94px;text-align:right;font-size:12px;line-height:14px;color:#000;white-space:nowrap;letter-spacing:-0.2px;letter-spacing:-0.3px">80,00</div>
<div class="a" style="left:560px;top:473px;width:64px;text-align:right;font-size:12px;line-height:14px;color:#000;white-space:nowrap;letter-spacing:-0.2px">4182</div>
<div class="a" style="left:629px;top:473px;font-size:12px;line-height:14px;color:#000;white-space:nowrap;letter-spacing:-0.2px">API</div>
<div class="a" style="left:665px;top:473px;font-size:12px;line-height:14px;color:#000;white-space:nowrap;letter-spacing:-0.2px;letter-spacing:-0.5px">CONSUMIDOR</div>
<div class="a" style="left:816px;top:473px;font-size:12px;line-height:14px;color:#000;white-space:nowrap;letter-spacing:-0.2px;letter-spacing:-0.45px">CX:2529 OP:VENDA - DINHEIRO</div>
<div class="a" style="left:1077px;top:473px;font-size:12px;line-height:14px;color:#000;white-space:nowrap;letter-spacing:-0.2px;letter-spacing:-0.2px">08/01/2024</div>
<div class="a" style="left:1180px;top:473px;width:94px;text-align:right;font-size:12px;line-height:14px;color:#000;white-space:nowrap;letter-spacing:-0.2px;letter-spacing:-0.3px">520,00</div>
<div class="a" style="left:1354px;top:473px;width:94px;text-align:right;font-size:12px;line-height:14px;color:#000;white-space:nowrap;letter-spacing:-0.2px;letter-spacing:-0.3px">520,00</div>
<div class="a" style="left:1451px;top:294px;width:16px;height:436px;background:#f0f0f0"></div>
<svg class="a" style="left:1454px;top:298px" width="10" height="8" viewBox="0 0 10 8"><path d="M1.5,6.5 L5,2.5 L8.5,6.5" fill="none" stroke="#606060" stroke-width="1.8"/></svg>
<svg class="a" style="left:1454px;top:718px" width="10" height="8" viewBox="0 0 10 8"><path d="M1.5,1.5 L5,5.5 L8.5,1.5" fill="none" stroke="#606060" stroke-width="1.8"/></svg>
<div class="a" style="left:551px;top:731px;width:900px;height:15px;background:#f0f0f0"></div>
<div class="a" style="left:547px;top:730px;width:4px;height:16px;background:#000"></div>
<div class="a" style="left:568px;top:731px;width:72px;height:15px;background:#cdcdcd"></div>
<svg class="a" style="left:555px;top:734px" width="8" height="10" viewBox="0 0 8 10"><path d="M6,1.5 L2.5,5 L6,8.5" fill="none" stroke="#606060" stroke-width="1.8"/></svg>
<svg class="a" style="left:1439px;top:734px" width="8" height="10" viewBox="0 0 8 10"><path d="M2,1.5 L5.5,5 L2,8.5" fill="none" stroke="#606060" stroke-width="1.8"/></svg>
<div class="a" style="left:0;top:937px;width:1919px;height:29px;background:#f0f0f0"></div>
<div class="a" style="left:0;top:937px;width:1919px;height:1px;background:#6a6a6a"></div>
<div class="a" style="left:0;top:938px;width:1919px;height:1px;background:#8c8c8c"></div>
<div class="a" style="left:0;top:939px;width:1919px;height:3px;background:#f7f7f7"></div>
<div class="a" style="left:0;top:942px;width:1919px;height:1px;background:#dedede"></div>
<div class="a" style="left:1496px;top:944px;width:1px;height:22px;background:#d4d4d4"></div>
<div class="a" style="left:1603px;top:944px;width:1px;height:22px;background:#d4d4d4"></div>
<div class="a" style="left:1654px;top:944px;width:1px;height:22px;background:#d4d4d4"></div>
<div class="a" style="left:1730px;top:944px;width:1px;height:22px;background:#d4d4d4"></div>
<div class="a" style="left:1812px;top:944px;width:1px;height:22px;background:#d4d4d4"></div>
<div class="a" style="left:1844px;top:944px;width:1px;height:22px;background:#d4d4d4"></div>
<div class="a" style="left:1881px;top:944px;width:1px;height:22px;background:#d4d4d4"></div>
<div class="a" style="left:1521px;top:948px;font-size:12px;line-height:14px;color:#111;white-space:nowrap;letter-spacing:-0.5px">99 - VIXENLITE</div>
<div class="a" style="left:1628px;top:948px;font-size:12px;line-height:14px;color:#111;white-space:nowrap;letter-spacing:-0.5px">PWI</div>
<div class="a" style="left:1679px;top:948px;font-size:12px;line-height:14px;color:#111;white-space:nowrap;letter-spacing:-0.5px">(TODAS)</div>
<div class="a" style="left:1756px;top:948px;font-size:12px;line-height:14px;color:#111;white-space:nowrap;letter-spacing:-0.5px">ALARMES</div>
<div class="a" style="left:1849px;top:948px;font-size:12px;line-height:14px;color:#111;white-space:nowrap;letter-spacing:-0.5px;letter-spacing:0">NUM</div>
<svg class="a" style="left:1499px;top:946px" width="20" height="18" viewBox="0 0 20 18">
<circle cx="8" cy="8" r="7" fill="#3a8ad8"/><path d="M3,4 C5,2 8,3 7,6 C6,8 4,7 3,9 C2,7 2,5 3,4 Z M9,9 C11,8 13,9 12,12 C11,14 9,14 8.5,12 Z M8,1.5 C10,1 12,2 12,4 C10,4 9,3 8,1.5Z" fill="#4caf3a"/>
<rect x="11" y="8" width="6" height="9" fill="#e8c040" stroke="#9a7a10" stroke-width="0.8"/><path d="M12.5,10.5 H15.5 M12.5,13 H15.5" stroke="#9a7a10" stroke-width="0.8"/></svg>
<svg class="a" style="left:1609px;top:946px" width="14" height="18" viewBox="0 0 14 18">
<circle cx="7" cy="5.5" r="4" fill="#f39a2a"/><path d="M1.5,16.5 C1.5,12 3.5,10 7,10 C10.5,10 12.5,12 12.5,16.5 Z" fill="#3a6ad0"/></svg>
<svg class="a" style="left:1658px;top:946px" width="18" height="18" viewBox="0 0 18 18">
<path d="M6,2 H12 L15,5 V16 H6 Z" fill="#f4f4f4" stroke="#c8c8c8" stroke-width="0.8"/>
<circle cx="4.5" cy="10" r="3.2" fill="#eee" stroke="#333" stroke-width="1.6"/><circle cx="12.5" cy="10" r="3.2" fill="#eee" stroke="#333" stroke-width="1.6"/><path d="M7.5,9 H9.5" stroke="#333" stroke-width="1.6"/></svg>
<svg class="a" style="left:1734px;top:945px" width="18" height="20" viewBox="0 0 18 20">
<path d="M1,4 L3.5,6 M17,4 L14.5,6 M1,10 H3 M17,10 H15" stroke="#d4c840" stroke-width="0.9"/>
<path d="M9,2 C12,2 13,4.5 13,7.5 V12 L15,15 H3 L5,12 V7.5 C5,4.5 6,2 9,2 Z" fill="#f2d21e" stroke="#b09a10" stroke-width="0.8"/>
<circle cx="9" cy="16.5" r="1.8" fill="#333"/></svg>
</body></html>
